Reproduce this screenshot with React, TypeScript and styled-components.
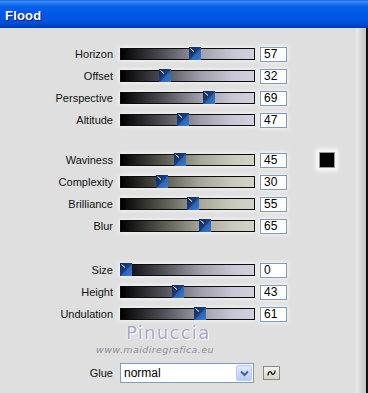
import styled, { createGlobalStyle } from 'styled-components';

const GlobalStyle = createGlobalStyle`
  html, body {
    margin: 0;
    padding: 0;
    background: #dfdfdf;
  }
  body {
    font-family: "Liberation Sans", Arial, sans-serif;
  }
`;

type SliderInfo = {
  label: string;
  value: number;
};

type Tint = 'lavender' | 'sand';

const groups: { tint: Tint; gap: number; sliders: SliderInfo[] }[] = [
  {
    tint: 'lavender',
    gap: 0,
    sliders: [
      { label: 'Horizon', value: 57 },
      { label: 'Offset', value: 32 },
      { label: 'Perspective', value: 69 },
      { label: 'Altitude', value: 47 },
    ],
  },
  {
    tint: 'sand',
    gap: 18,
    sliders: [
      { label: 'Waviness', value: 45 },
      { label: 'Complexity', value: 30 },
      { label: 'Brilliance', value: 55 },
      { label: 'Blur', value: 65 },
    ],
  },
  {
    tint: 'lavender',
    gap: 22,
    sliders: [
      { label: 'Size', value: 0 },
      { label: 'Height', value: 43 },
      { label: 'Undulation', value: 61 },
    ],
  },
];

const Window = styled.div`
  position: relative;
  width: 368px;
  height: 393px;
  overflow: hidden;
  background: #dfdfdf;
  display: flex;
  flex-direction: column;
`;

const TitleBar = styled.div`
  height: 28px;
  flex-shrink: 0;
  display: flex;
  align-items: center;
  padding: 2px 0 0 5px;
  box-sizing: border-box;
  background: linear-gradient(
    to bottom,
    #0b4fd4 0px,
    #3b8df7 1px,
    #2a7cf2 3px,
    #0a62ea 6px,
    #0058e6 12px,
    #0054e0 20px,
    #004bd3 24px,
    #0040bb 27px,
    #00339c 28px
  );
`;

const Title = styled.span`
  color: #ffffff;
  font-weight: bold;
  font-size: 13px;
  letter-spacing: 0.2px;
  text-shadow: 1px 1px 0 #0a1a70;
`;

const Body = styled.div`
  flex: 1;
  display: flex;
  border-right: 2px solid #111;
  background: linear-gradient(
    to right,
    #dfdfdf 0,
    #dfdfdf 355px,
    #e8e8e8 357px,
    #d2d2d2 362px,
    #c4c4c4 366px
  );
`;

const Content = styled.div`
  flex: 1;
  display: flex;
  flex-direction: column;
  padding-top: 15px;
`;

const Group = styled.div<{ $gap: number }>`
  display: flex;
  flex-direction: column;
  margin-top: ${(p) => p.$gap}px;
`;

const Row = styled.div`
  height: 22px;
  display: flex;
  align-items: center;
`;

const Label = styled.span`
  width: 113px;
  text-align: right;
  font-size: 11px;
  color: #111;
  flex-shrink: 0;
`;

const Track = styled.div<{ $tint: Tint }>`
  position: relative;
  width: 135px;
  height: 12px;
  margin-left: 7px;
  box-sizing: border-box;
  border: 1px solid #0c0c0c;
  background: ${(p) =>
    p.$tint === 'sand'
      ? 'linear-gradient(to right, #000 0%, #55554e 30%, #a7a79a 60%, #cbcbbd 85%, #d2d2c6 100%)'
      : 'linear-gradient(to right, #000 0%, #4b4b52 30%, #a0a0ac 60%, #c8c8d6 85%, #d0d0de 100%)'};
  box-shadow: 0 0 4px 1px rgba(255, 255, 255, 0.7);
`;

const Thumb = styled.svg`
  position: absolute;
  top: -2px;
  width: 12px;
  height: 13px;
`;

const NumberBox = styled.div`
  width: 27px;
  height: 15px;
  margin-left: 5px;
  box-sizing: border-box;
  border: 1px solid #7f9db9;
  background: #fff;
  font-size: 12px;
  line-height: 13px;
  padding-left: 3px;
  color: #000;
  box-shadow: 0 0 4px 1px rgba(255, 255, 255, 0.7);
`;

const Swatch = styled.div`
  width: 20px;
  height: 20px;
  margin-left: 30px;
  box-sizing: border-box;
  border: 2px solid #f4f4f4;
  outline: 1px solid #9a9a9a;
  outline-offset: -3px;
  background: #000;
  box-shadow: 0 0 4px 1px rgba(255, 255, 255, 0.9);
`;

const Watermark = styled.div`
  height: 36px;
  display: flex;
  flex-direction: column;
  align-items: flex-start;
  padding-left: 96px;
`;

const WatermarkName = styled.span`
  margin-left: 30px;
  margin-top: -2px;
  font-family: "DejaVu Sans", sans-serif;
  font-size: 18px;
  line-height: 20px;
  letter-spacing: 1.3px;
  color: #a8a8c8;
  text-shadow: 1px 1px 0 #ffffff, -1px 0 0 #f4f4f4;
`;

const WatermarkUrl = styled.span`
  font-family: "DejaVu Sans", sans-serif;
  font-style: italic;
  font-size: 9.5px;
  letter-spacing: 0.4px;
  color: #8e8e9a;
  margin-top: 1px;
`;

const GlueRow = styled.div`
  height: 22px;
  margin-top: 1px;
  display: flex;
  align-items: center;
`;

const Select = styled.div`
  width: 134px;
  height: 20px;
  margin-left: 7px;
  box-sizing: border-box;
  border: 1px solid #7f9db9;
  background: #fff;
  display: flex;
  align-items: center;
  justify-content: space-between;
  padding: 1px;
  font-size: 12px;
  color: #000;
`;

const SelectText = styled.span`
  padding-left: 2px;
`;

const DropButton = styled.div`
  width: 16px;
  height: 16px;
  box-sizing: border-box;
  border: 1px solid #b9cbf3;
  border-radius: 2px;
  background: linear-gradient(to bottom, #dfe9fe, #b8cbfa);
  display: flex;
  align-items: center;
  justify-content: center;
`;

const SmallButton = styled.div`
  width: 17px;
  height: 14px;
  margin-left: 9px;
  box-sizing: border-box;
  border: 1px solid #8a8a80;
  background: linear-gradient(to bottom, #f2f2ea, #d6d6c8);
  display: flex;
  align-items: center;
  justify-content: center;
`;

const SliderThumb = ({ value }: { value: number }) => (
  <Thumb viewBox='0 0 12 13' style={{ left: `${(value / 100) * 121 - 1}px` }}>
    <defs>
      <linearGradient id='thumbGrad' x1='0' y1='0' x2='1' y2='1'>
        <stop offset='0' stopColor='#12264e' />
        <stop offset='0.5' stopColor='#1d3f7c' />
        <stop offset='0.55' stopColor='#2c64b4' />
        <stop offset='1' stopColor='#3a7ad0' />
      </linearGradient>
    </defs>
    <rect x='0' y='0' width='12' height='13' fill='url(#thumbGrad)' />
    <line x1='1.5' y1='1.5' x2='5' y2='4.5' stroke='#ffffff' strokeWidth='1' />
  </Thumb>
);

const App = () => {
  return (
    <Window>
      <GlobalStyle />
      <TitleBar>
        <Title>Flood</Title>
      </TitleBar>
      <Body>
        <Content>
          {groups.map((group, gi) => (
            <Group key={gi} $gap={group.gap}>
              {group.sliders.map((s) => (
                <Row key={s.label}>
                  <Label>{s.label}</Label>
                  <Track $tint={group.tint}>
                    <SliderThumb value={s.value} />
                  </Track>
                  <NumberBox>{s.value}</NumberBox>
                  {s.label === 'Waviness' && <Swatch />}
                </Row>
              ))}
            </Group>
          ))}
          <Watermark>
            <WatermarkName>Pinuccia</WatermarkName>
            <WatermarkUrl>www.maidiregrafica.eu</WatermarkUrl>
          </Watermark>
          <GlueRow>
            <Label>Glue</Label>
            <Select>
              <SelectText>normal</SelectText>
              <DropButton>
                <svg width='9' height='7' viewBox='0 0 9 7'>
                  <path d='M1 1.5 L4.5 5 L8 1.5' fill='none' stroke='#4d6185' strokeWidth='2' />
                </svg>
              </DropButton>
            </Select>
            <SmallButton>
              <svg width='9' height='8' viewBox='0 0 9 8'>
                <path
                  d='M1 6.5 C1 2 4 2 4.5 4 C5 6 8 6 8 1.5'
                  fill='none'
                  stroke='#222'
                  strokeWidth='1.4'
                />
              </svg>
            </SmallButton>
          </GlueRow>
        </Content>
      </Body>
    </Window>
  );
};

export default App;
